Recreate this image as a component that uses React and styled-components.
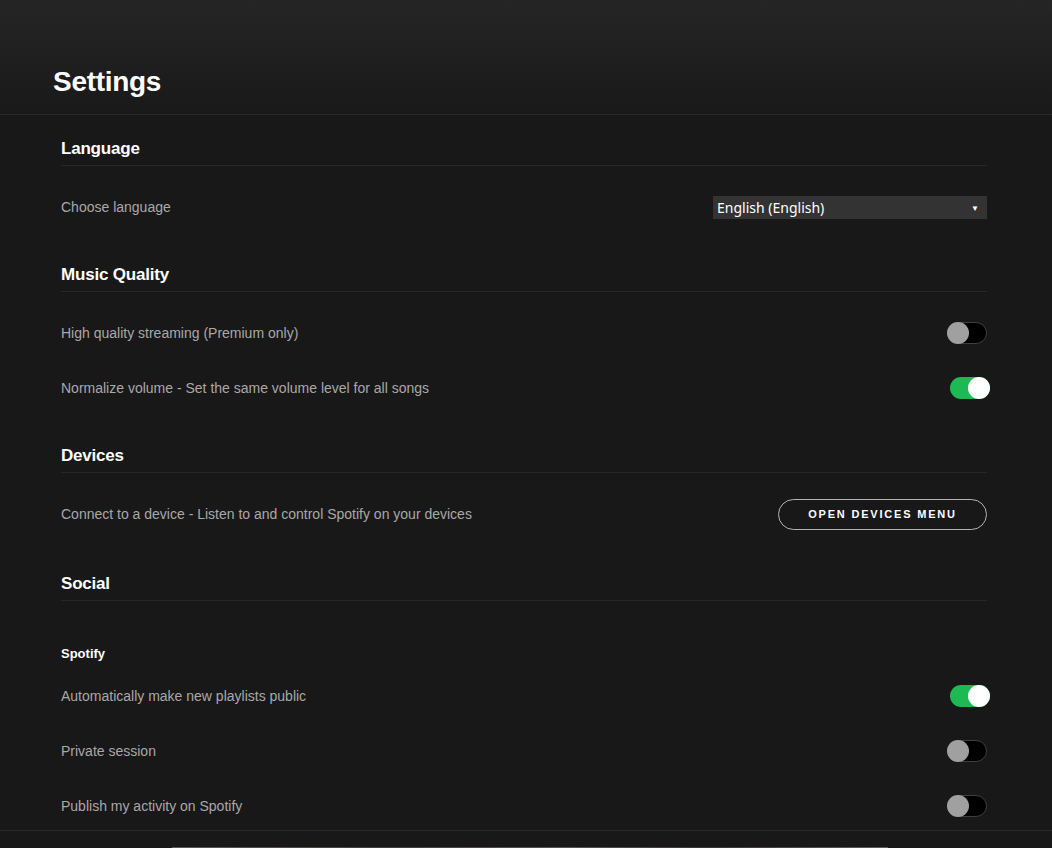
import React, { useState } from "react";
import styled, { createGlobalStyle } from "styled-components";

const GlobalStyle = createGlobalStyle`
  html, body {
    margin: 0;
    padding: 0;
    background: #181818;
    overflow: hidden;
  }
  body {
    font-family: "Liberation Sans", Arial, sans-serif;
    color: #fff;
  }
`;

const SECTIONS = [
  {
    title: "Language",
    rows: [{ label: "Choose language", control: "select" }],
  },
  {
    title: "Music Quality",
    rows: [
      { label: "High quality streaming (Premium only)", control: "toggle", on: false },
      { label: "Normalize volume - Set the same volume level for all songs", control: "toggle", on: true },
    ],
  },
  {
    title: "Devices",
    rows: [
      {
        label: "Connect to a device - Listen to and control Spotify on your devices",
        control: "button",
        text: "OPEN DEVICES MENU",
      },
    ],
  },
  {
    title: "Social",
    sub: "Spotify",
    rows: [
      { label: "Automatically make new playlists public", control: "toggle", on: true },
      { label: "Private session", control: "toggle", on: false },
      { label: "Publish my activity on Spotify", control: "toggle", on: false },
    ],
  },
];

function Toggle({ initial }) {
  const [on, setOn] = useState(initial);
  return (
    <Switch $on={on} onClick={() => setOn(!on)}>
      <Knob $on={on} />
    </Switch>
  );
}

function Control({ row }) {
  if (row.control === "select") {
    return (
      <Select>
        <span>English (English)</span>
        <Caret>▼</Caret>
      </Select>
    );
  }
  if (row.control === "button") {
    return <OutlineButton>{row.text}</OutlineButton>;
  }
  return <Toggle initial={row.on} />;
}

export default function App() {
  return (
    <Page>
      <GlobalStyle />
      <Header>
        <Title>Settings</Title>
      </Header>
      <Content>
        {SECTIONS.map((section) => (
          <Section key={section.title}>
            <SectionTitle>{section.title}</SectionTitle>
            {section.sub && <SubTitle>{section.sub}</SubTitle>}
            {section.rows.map((row) => (
              <Row key={row.label} $roomy={row.control === "button"}>
                <Label>{row.label}</Label>
                <Control row={row} />
              </Row>
            ))}
          </Section>
        ))}
      </Content>
      <Footer>
        <Shelf />
      </Footer>
    </Page>
  );
}

const Page = styled.div`
  width: 1052px;
  height: 848px;
  overflow: hidden;
  background: #181818;
`;

const Header = styled.header`
  height: 115px;
  box-sizing: border-box;
  display: flex;
  align-items: flex-end;
  padding: 0 0 16px 53px;
  background: linear-gradient(#252525, #191919);
  border-bottom: 1px solid #2a2a2a;
`;

const Title = styled.h1`
  margin: 0;
  font-size: 28px;
  line-height: 32px;
  font-weight: 700;
  letter-spacing: -0.3px;
`;

const Content = styled.div`
  padding: 0 65px 0 61px;
`;

const Section = styled.section`
  display: flex;
  flex-direction: column;
  padding-top: 32px;
  &:first-child {
    padding-top: 22px;
  }
`;

const SectionTitle = styled.h2`
  margin: 0 0 10px;
  font-size: 17px;
  line-height: 24px;
  font-weight: 700;
  padding-bottom: 4px;
  border-bottom: 1px solid #282828;
  letter-spacing: -0.2px;
`;

const SubTitle = styled.h3`
  margin: 33px 0 1px;
  font-size: 13px;
  line-height: 20px;
  font-weight: 700;
`;

const Row = styled.div`
  height: 48px;
  margin-top: 7px;
  margin-bottom: ${(p) => (p.$roomy ? "2px" : "0")};
  display: flex;
  align-items: center;
  justify-content: space-between;
`;

const Label = styled.span`
  font-size: 14px;
  color: #a8a8a8;
`;

const Select = styled.div`
  width: 274px;
  height: 23px;
  box-sizing: border-box;
  display: flex;
  align-items: center;
  justify-content: space-between;
  padding: 0 8px 0 4px;
  background: #333333;
  color: #fff;
  font-size: 14px;
  font-family: "Noto Sans", "Liberation Sans", sans-serif;
`;

const Caret = styled.span`
  font-size: 8px;
`;

const Switch = styled.div`
  position: relative;
  width: 40px;
  height: 22px;
  box-sizing: border-box;
  border-radius: 11px;
  cursor: pointer;
  background: ${(p) => (p.$on ? "#1db954" : "#000")};
  border: ${(p) => (p.$on ? "none" : "1px solid #3e3e3e")};
  margin-right: ${(p) => (p.$on ? "-3px" : "0")};
`;

const Knob = styled.div`
  position: absolute;
  top: ${(p) => (p.$on ? "0" : "-1px")};
  left: ${(p) => (p.$on ? "18px" : "-1px")};
  width: 22px;
  height: 22px;
  border-radius: 50%;
  background: ${(p) => (p.$on ? "#fff" : "#a0a0a0")};
`;

const OutlineButton = styled.button`
  width: 209px;
  height: 31px;
  border-radius: 16px;
  border: 1px solid #b3b3b3;
  background: transparent;
  color: #fff;
  font-family: "Liberation Sans", Arial, sans-serif;
  font-size: 11px;
  font-weight: 700;
  letter-spacing: 1.8px;
  cursor: pointer;
`;

const Footer = styled.div`
  border-top: 1px solid #2a2a2a;
  padding: 16px 0 0 172px;
`;

const Shelf = styled.div`
  width: 716px;
  height: 4px;
  background: linear-gradient(90deg, #5a5a5a, #4a3c34 30%, #555 55%, #3e3430 75%, #5c5c5c);
`;
